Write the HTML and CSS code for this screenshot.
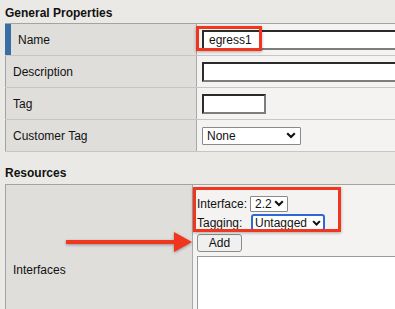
FILE: index.html
```html
<!DOCTYPE html>
<html>
<head>
<meta charset="utf-8">
<link rel="stylesheet" href="styles.css">
</head>
<body>
<div class="page">
  <h2 class="section-title">General Properties</h2>
  <div class="props general">
    <div class="row active">
      <div class="label">Name</div>
      <div class="value"><input class="text wide" type="text" value="egress1"></div>
    </div>
    <div class="row">
      <div class="label">Description</div>
      <div class="value"><input class="text wide" type="text" value=""></div>
    </div>
    <div class="row">
      <div class="label">Tag</div>
      <div class="value"><input class="text short" type="text" value=""></div>
    </div>
    <div class="row">
      <div class="label">Customer Tag</div>
      <div class="value">
        <select class="sel sel-none"><option>None</option></select>
      </div>
    </div>
  </div>

  <h2 class="section-title resources">Resources</h2>
  <div class="props res">
    <div class="row tall">
      <div class="label">Interfaces</div>
      <div class="value">
        <div class="iface-form">
          <span class="flabel">Interface:</span>
          <select class="sel sel-iface"><option>2.2</option></select>
          <span class="flabel">Tagging:</span>
          <select class="sel sel-tag"><option>Untagged</option></select>
        </div>
        <button class="btn" type="button">Add</button>
        <textarea class="list"></textarea>
      </div>
    </div>
  </div>

  <div class="callout callout-name"></div>
  <div class="callout callout-iface"></div>
  <svg class="arrow" width="140" height="28" viewBox="0 0 140 28">
    <rect x="6" y="12" width="114" height="4" fill="#f0361e"/>
    <polygon points="114,4 132,14 114,24" fill="#f0361e"/>
  </svg>
</div>
</body>
</html>
```

FILE: styles.css
```css
html, body {
  margin: 0;
  padding: 0;
  background: #eae9e6;
  overflow: hidden;
}

body {
  font-family: "Liberation Sans", Arial, sans-serif;
  font-size: 12px;
  color: #111;
}

.page {
  position: relative;
  width: 390px;
  height: 303px;
  overflow: hidden;
  padding: 6px 0 0 5px;
}

.section-title {
  margin: 0 0 3px 0;
  font-size: 12px;
  font-weight: bold;
  line-height: 14px;
  color: #111;
}

.section-title.resources {
  margin-top: 14px;
  margin-bottom: 4px;
}

.props {
  border-top: 1px solid #a3a3a3;
  width: 415px;
}

.row {
  display: grid;
  grid-template-columns: 192px 1fr;
  border-bottom: 1px solid #c6c6c6;
  height: 31px;
}

.res .row {
  grid-template-columns: 188px 1fr;
  height: auto;
}

.label {
  display: flex;
  align-items: center;
  background: #dfdedb;
  border-left: 1px solid #a3a3a3;
  border-right: 1px solid #a9a9a9;
  padding-left: 7px;
  box-sizing: border-box;
}

.row.active .label {
  border-left: 6px solid #3a6da3;
}

.value {
  display: flex;
  align-items: center;
  background: #f4f3f1;
  padding-left: 5px;
}

.res .value {
  display: block;
  padding: 9px 0 4px 4px;
}

.text {
  box-sizing: border-box;
  height: 20px;
  margin: 0;
  padding: 0 5px;
  font-family: "Liberation Sans", Arial, sans-serif;
  font-size: 12px;
  color: #111;
  background: #fff;
  border-style: solid;
  border-width: 2px;
  border-color: #2b2b2b #7d7d7d #7d7d7d #2b2b2b;
  border-radius: 0;
  outline: none;
}

.text.wide { width: 210px; }
.text.short { width: 64px; }

.sel {
  -webkit-appearance: none;
  appearance: none;
  box-sizing: border-box;
  margin: 0;
  font-family: "Liberation Sans", Arial, sans-serif;
  font-size: 12px;
  color: #111;
  background-color: #fff;
  background-image: url("data:image/svg+xml;utf8,<svg xmlns='http://www.w3.org/2000/svg' width='10' height='7'><path d='M1.2 1.3 L5 5.1 L8.8 1.3' fill='none' stroke='%23111' stroke-width='2.1'/></svg>");
  background-repeat: no-repeat;
  background-position: right 4px center;
  border: 1px solid #8a8a8a;
  border-radius: 1px;
  outline: none;
}

.sel-none {
  width: 99px;
  height: 18px;
  padding: 0 0 0 4px;
}

.iface-form {
  display: grid;
  grid-template-columns: 50px auto;
  grid-auto-rows: 19px;
  column-gap: 3px;
  align-items: center;
  justify-items: start;
}

.flabel {
  white-space: nowrap;
}

.sel-iface {
  width: 38px;
  height: 16px;
  padding: 0 0 0 4px;
  background-position: right 3px center;
}

.sel-tag {
  width: 74px;
  height: 17px;
  padding: 0 0 0 2px;
  border: 2px solid #2f67d6;
  border-radius: 3px;
  background-image: url("data:image/svg+xml;utf8,<svg xmlns='http://www.w3.org/2000/svg' width='9' height='6'><path d='M1.1 1.1 L4.5 4.5 L7.9 1.1' fill='none' stroke='%23111' stroke-width='2'/></svg>");
  background-position: right 2px center;
  margin-left: 1px;
}

.btn {
  display: block;
  box-sizing: border-box;
  width: 45px;
  height: 18px;
  margin: 2px 0 0 0;
  padding: 0;
  font-family: "Liberation Sans", Arial, sans-serif;
  font-size: 12px;
  color: #111;
  background: #f0f0f0;
  border: 1px solid #8c8c8c;
  border-radius: 3px;
}

.list {
  display: block;
  box-sizing: border-box;
  width: 215px;
  height: 95px;
  margin: 4px 0 0 0;
  padding: 0;
  background: #fff;
  border: 1px solid #9a9a9a;
  resize: none;
  outline: none;
}

.callout {
  position: absolute;
  box-sizing: border-box;
  border: 3px solid #f0361e;
  box-shadow: 0 1px 3px rgba(0, 0, 0, 0.3);
}

.callout-name {
  left: 196px;
  top: 26px;
  width: 66px;
  height: 25px;
}

.callout-iface {
  left: 193px;
  top: 187px;
  width: 148px;
  height: 45px;
}

.arrow {
  position: absolute;
  left: 60px;
  top: 228px;
  filter: drop-shadow(0 1px 1.5px rgba(0, 0, 0, 0.35));
}
```
